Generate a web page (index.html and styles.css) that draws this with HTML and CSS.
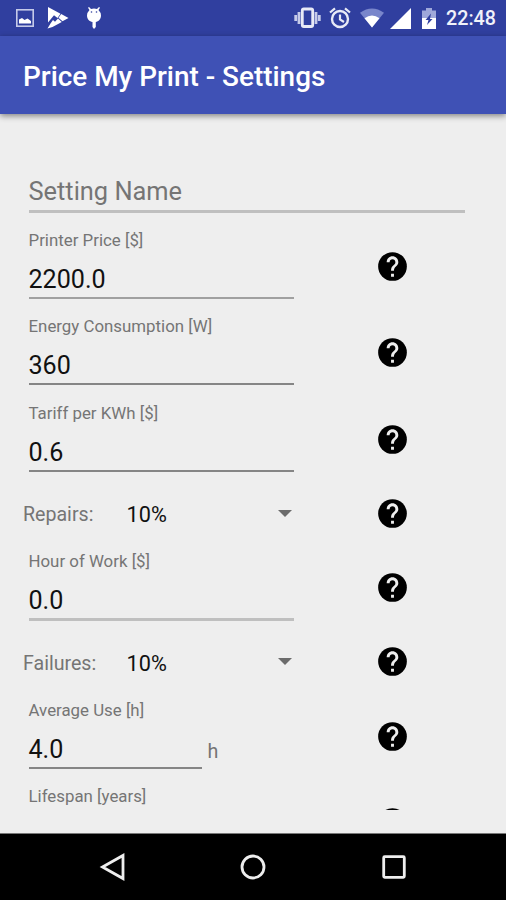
FILE: index.html
```html
<!DOCTYPE html>
<html lang="en">
<head>
<meta charset="utf-8">
<title>Price My Print - Settings</title>
<link rel="stylesheet" href="styles.css">
</head>
<body>
<svg class="defs" width="0" height="0">
  <symbol id="help" viewBox="2 2 20 20">
    <circle cx="12" cy="12" r="9.9"/>
    <path fill="#eee" d="M13 19h-2v-2h2v2zm2.070-7.750-.9.92C13.450 12.900 13 13.500 13 15h-2v-.5c0-1.100.45-2.100 1.170-2.830l1.240-1.260c.37-.36.59-.86.59-1.410 0-1.100-.9-2-2-2s-2 .9-2 2H8c0-2.210 1.790-4 4-4s4 1.790 4 4c0 .88-.36 1.680-.93 2.250z"/>
  </symbol>
</svg>
<div class="phone">
  <header class="status">
    <div class="notifications">
      <svg class="picture" width="18" height="18" viewBox="0 0 18 18"><rect x=".8" y=".8" width="16.4" height="16.4" fill="none" stroke="#c5cae9" stroke-width="1.6"/><path fill="#fff" d="M3 14.500v-4l3-1.500 2.500 2 3-1.500 3.500 2.500v2.500z"/></svg>
      <svg class="play" width="22" height="22" viewBox="0 0 22 22"><path fill="#fff" d="M1 0 13.500 6.700 10.500 11 7 8.200 1 15.500zM14.200 7.100 21.500 11 15.500 14.300 11.500 10.800zM.5 21.500 3.500 16.500 6 13 8 14.800 11 11.500 14.800 15 5.500 20z"/></svg>
      <svg class="bug" width="16" height="22" viewBox="0 0 16 22"><path fill="#fff" d="M3 0 5 2q3-1.200 6 0l2-2 1 .8-1.500 2.200q2.500 2.500 2.500 5.500c0 3.500-2.500 6-5.200 6.500V20L8 22l-1.500-2v-5C3.500 14.500 1 12 1 8.500q0-3 2.500-5.500L2 .8z"/><circle cx="5.500" cy="5" r=".8" fill="#303f9f"/><circle cx="10.500" cy="5" r=".8" fill="#303f9f"/></svg>
    </div>
    <div class="indicators">
      <svg class="vibrate" width="27" height="22" viewBox="0 0 27 22"><rect x="8.300" y="2" width="10.400" height="17.500" rx="1.500" fill="none" stroke="#e8eaf6" stroke-width="2.800"/><path fill="none" stroke="#c5cae9" stroke-width="2.800" d="M5 5v12M22 5v12M1.700 8v6M25.300 8v6"/></svg>
      <svg class="alarm" width="22" height="22" viewBox="0 0 22 22" fill="none" stroke="#e8eaf6"><circle cx="11" cy="12" r="8" stroke-width="2.400"/><path stroke-width="2.200" d="M1 5.500 6 1.300M21 5.500 16 1.300M11 7.500V12.500l4 2.500"/></svg>
      <svg class="wifi" width="24" height="20" viewBox="0 0 24 20"><path fill="#7986cb" d="M0 4.800Q12-4 24 4.800L12 19.500z"/><path fill="#fff" d="M4.500 10.200Q12 5 19.500 10.200L12 19.500z"/></svg>
      <svg class="signal" width="21" height="21" viewBox="0 0 21 21"><path fill="#fff" d="M21 0V21H0z"/></svg>
      <svg class="battery" width="14" height="21" viewBox="0 0 14 21"><path fill="#9fa8da" d="M0 2.500h4V0h6v2.500h4V21H0z"/><path fill="#fff" d="M0 10h14v11H0z"/><path fill="#303f9f" d="M9 5.500 3.500 12h3L5 17l5.500-6H8z"/></svg>
      <span class="clock">22:48</span>
    </div>
  </header>
  <div class="appbar"><h1>Price My Print - Settings</h1></div>
  <main class="content">
    <div class="setting-name">Setting Name</div>
    <section class="row">
      <div class="field first"><label>Printer Price [$]</label><div class="value">2200.0</div></div>
      <svg class="help"><use href="#help"/></svg>
    </section>
    <section class="row">
      <div class="field"><label>Energy Consumption [W]</label><div class="value">360</div></div>
      <svg class="help"><use href="#help"/></svg>
    </section>
    <section class="row">
      <div class="field"><label>Tariff per KWh [$]</label><div class="value">0.6</div></div>
      <svg class="help"><use href="#help"/></svg>
    </section>
    <section class="row spinner">
      <span class="caption">Repairs:</span><span class="choice">10%</span><i class="arrow"></i>
      <svg class="help"><use href="#help"/></svg>
    </section>
    <section class="row">
      <div class="field soft"><label>Hour of Work [$]</label><div class="value">0.0</div></div>
      <svg class="help"><use href="#help"/></svg>
    </section>
    <section class="row spinner">
      <span class="caption">Failures:</span><span class="choice">10%</span><i class="arrow"></i>
      <svg class="help"><use href="#help"/></svg>
    </section>
    <section class="row">
      <div class="field short"><label>Average Use [h]</label><div class="value">4.0</div></div>
      <span class="unit">h</span>
      <svg class="help"><use href="#help"/></svg>
    </section>
    <section class="row">
      <div class="field short"><label>Lifespan [years]</label></div>
      <svg class="help"><use href="#help"/></svg>
    </section>
  </main>
  <nav class="navbar">
    <svg width="28" height="28" viewBox="0 0 28 28"><path d="M24 2.500v23L3.500 14z"/></svg>
    <svg width="28" height="28" viewBox="0 0 28 28"><circle cx="14" cy="14" r="11"/></svg>
    <svg width="28" height="28" viewBox="0 0 28 28"><rect x="3.700" y="3.700" width="20.600" height="20.600" rx="1"/></svg>
  </nav>
</div>
</body>
</html>
```

FILE: styles.css
```css
* { box-sizing: border-box; }
body { margin: 0; font-family: Roboto, "Liberation Sans", sans-serif; }
svg { display: block; flex: none; }
.defs { position: absolute; }
.phone { width: 506px; height: 900px; display: flex; flex-direction: column; overflow: hidden; background: #eee; }

.status { height: 36px; flex: none; display: flex; justify-content: space-between; background: #303f9f; padding: 0 10px 0 16px; }
.notifications, .indicators { display: flex; align-items: center; }
.picture { margin-right: 13px; }
.play { margin-right: 17px; }
.vibrate { margin-right: 8px; }
.alarm { margin-right: 9px; }
.wifi { margin-right: 6px; }
.signal { margin-right: 11px; }
.battery { margin-right: 10px; }
.clock { width: 50px; font-size: 19.7px; font-weight: 500; line-height: 36px; padding-top: 2px; color: #f1f2fa; white-space: nowrap; }

.appbar { height: 78px; flex: none; display: flex; align-items: center; padding: 4px 0 0 23px; background: #3f51b5; box-shadow: 0 2px 6px rgba(0, 0, 0, .45); }
h1 { margin: 0; font-size: 27.900px; font-weight: 500; line-height: 36px; color: #fff; white-space: nowrap; }

.content { height: 696px; flex: none; overflow: hidden; padding: 54px 41.500px 0 23px; color: #757575; }
.setting-name { height: 45px; margin: 0 0 10px 5.500px; padding-top: 5px; font-size: 25.400px; line-height: 36px; border-bottom: 3px solid #bfbfbf; }
.row { height: 86.430px; display: flex; align-items: flex-start; }
.field { width: 265px; height: 76px; flex: none; margin-left: 5.500px; padding-top: 7px; }
.field label { display: block; font-size: 16.850px; line-height: 20px; white-space: nowrap; }
.value { height: 49px; padding-top: 11px; font-size: 25.100px; line-height: 38px; color: #111; border-bottom: 2px solid #858585; }
.first .value { border-color: #a0a0a0; }
.soft .value { height: 50px; border-bottom: 3px solid #bfbfbf; }
.field.short { width: 173px; }
.unit { padding: 47px 0 0 6px; font-size: 19.700px; line-height: 24px; }
.help { width: 29px; height: 29px; align-self: center; margin: 0 57.800px 0 auto; }
.spinner { height: 62.100px; align-items: center; }
.caption { width: 103.500px; padding-top: 3px; font-size: 19.600px; }
.choice { width: 151px; padding-top: 3px; font-size: 21.700px; color: #111; }
.arrow { border: 7px solid transparent; border-top-color: #6b6b6b; border-bottom: 0; }

.navbar { flex: 1; margin-top: 23px; border-top: 1px solid #777; background: #000; display: flex; align-items: center; justify-content: center; gap: 112.500px; }
.navbar svg { fill: none; stroke: #eee; stroke-width: 2.800; }
```
